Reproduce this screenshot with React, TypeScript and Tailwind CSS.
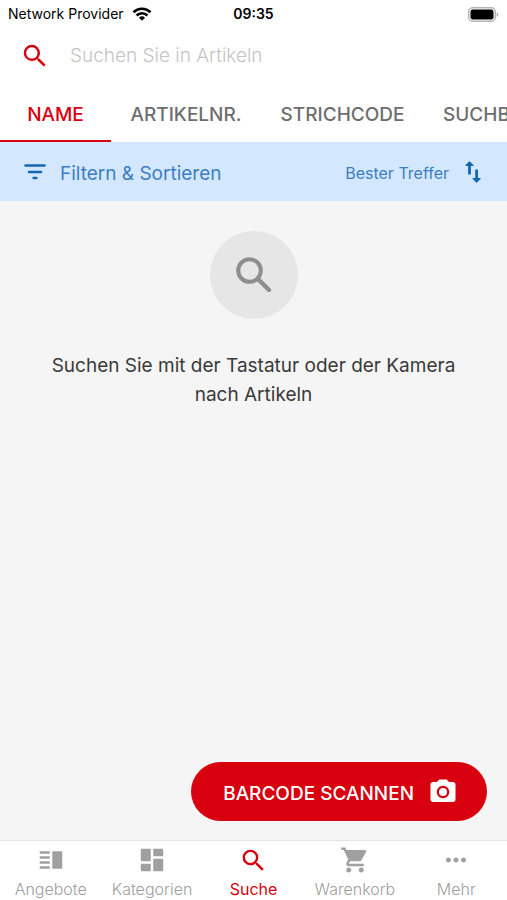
import { useState } from "react";
import type { ReactNode } from "react";
import {
  MdMoreHoriz,
  MdPhotoCamera,
  MdSearch,
  MdShoppingCart,
  MdVerticalSplit,
} from "react-icons/md";

function WifiIcon() {
  return (
    <svg viewBox="0 0 20 14" className="h-[14px] w-5" aria-hidden="true">
      <g fill="none" stroke="#000" strokeWidth="2.7">
        <path d="M1.5 5.2a12.2 12.2 0 0 1 17 0" />
        <path d="M4.6 8.5a7.6 7.6 0 0 1 10.8 0" />
      </g>
      <path d="M10 13.8 7 10.7a4.3 4.3 0 0 1 6 0z" fill="#000" />
    </svg>
  );
}

function BatteryIcon() {
  return (
    <svg viewBox="0 0 31 15" className="h-[15px] w-[31px]" aria-hidden="true">
      <rect x="0.75" y="0.75" width="26.5" height="13.5" rx="4" fill="#fff" stroke="#b4b4b4" strokeWidth="1.5" />
      <rect x="2.5" y="2.5" width="23" height="10" rx="2.2" fill="#000" />
      <path d="M28.6 5.2c1.3.4 1.9 1.3 1.9 2.3s-.6 1.9-1.9 2.3z" fill="#b4b4b4" />
    </svg>
  );
}

function FilterIcon() {
  return (
    <svg viewBox="0 0 22 16" className="h-4 w-[22px]" aria-hidden="true">
      <g stroke="#1467b3" strokeWidth="2.5" strokeLinecap="round">
        <path d="M1.5 1.5h19" />
        <path d="M5 8h12" />
        <path d="M9.6 14h2.8" />
      </g>
    </svg>
  );
}

function SwapIcon() {
  return (
    <svg viewBox="0 0 16 22" className="h-[22px] w-4" aria-hidden="true">
      <g fill="none" stroke="#1467b3" strokeWidth="2.8" strokeLinecap="round">
        <path d="M4.5 4v8.4" />
        <path d="M11.6 9.6V18" />
      </g>
      <path
        d="M4.1.5a.6.6 0 0 1 .8 0l3.5 3.6c.4.4.1 1-.4 1H1c-.5 0-.8-.6-.4-1zM11.2 21.5a.6.6 0 0 0 .8 0l3.5-3.6c.4-.4.1-1-.4-1h-7c-.5 0-.8.6-.4 1z"
        fill="#1467b3"
      />
    </svg>
  );
}

function DashboardIcon() {
  return (
    <svg viewBox="0 0 24 24" className="size-[30px]" fill="currentColor" aria-hidden="true">
      <rect x="3" y="3" width="8" height="10" rx="0.8" />
      <rect x="3" y="15" width="8" height="6" rx="0.8" />
      <rect x="13" y="3" width="8" height="6" rx="0.8" />
      <rect x="13" y="11" width="8" height="10" rx="0.8" />
    </svg>
  );
}

function LargeSearchIcon() {
  return (
    <svg viewBox="0 0 36 36" className="size-9" fill="none" stroke="#8e8e8e" aria-hidden="true">
      <circle cx="13.5" cy="13.5" r="11.3" strokeWidth="4" />
      <path d="M22.2 22.2 33 33" strokeWidth="4.4" strokeLinecap="round" />
    </svg>
  );
}

const tabs = [
  { label: "NAME", width: "min-w-[111px]" },
  { label: "ARTIKELNR.", width: "min-w-[150px]" },
  { label: "STRICHCODE", width: "min-w-[163px]" },
  { label: "SUCHBEGRIFF", width: "min-w-[150px]" },
];

const navItems: { label: string; icon: ReactNode }[] = [
  { label: "Angebote", icon: <MdVerticalSplit size={30} /> },
  { label: "Kategorien", icon: <DashboardIcon /> },
  { label: "Suche", icon: <MdSearch size={29} /> },
  { label: "Warenkorb", icon: <MdShoppingCart size={30} /> },
  { label: "Mehr", icon: <MdMoreHoriz size={30} /> },
];

export default function App() {
  const [activeTab, setActiveTab] = useState("NAME");

  return (
    <div className="flex min-h-screen flex-col bg-[#f5f5f5] font-['Inter',sans-serif]">
      <header className="bg-white">
        <div className="grid h-7 grid-cols-3 items-center px-2 text-sm text-black">
          <div className="flex items-center gap-2 whitespace-nowrap">
            <span>Network Provider</span>
            <WifiIcon />
          </div>
          <time className="text-center font-semibold">09:35</time>
          <div className="flex justify-end">
            <BatteryIcon />
          </div>
        </div>

        <label className="flex h-14 items-center gap-5 px-5 text-[#d8000f]">
          <MdSearch size={30} aria-hidden="true" />
          <input
            type="search"
            aria-label="Suchen Sie in Artikeln"
            placeholder="Suchen Sie in Artikeln"
            className="min-w-0 flex-1 bg-transparent text-[19px] font-light text-[#333] outline-none placeholder:text-[#c4c4c4]"
          />
        </label>

        <div role="tablist" className="flex h-[58px] overflow-x-auto [scrollbar-width:none]">
          {tabs.map(({ label, width }) => (
            <button
              key={label}
              type="button"
              role="tab"
              aria-selected={activeTab === label}
              onClick={() => setActiveTab(label)}
              className={`shrink-0 border-b-2 px-[19px] pt-1.5 text-[19px] font-medium ${width} ${
                activeTab === label
                  ? "border-[#d8000f] text-[#d8000f]"
                  : "border-transparent text-[#6e6e6e]"
              }`}
            >
              {label}
            </button>
          ))}
        </div>
      </header>

      <div className="flex h-[59px] items-center justify-between bg-[#d3e7ff] px-6 text-[#3b7fc0]">
        <button type="button" className="flex items-center gap-3.5 text-[19px]">
          <FilterIcon />
          <span className="pt-1.5">Filtern &amp; Sortieren</span>
        </button>
        <button type="button" className="flex items-center gap-4 pr-0.5 text-base">
          <span className="pt-0.5">Bester Treffer</span>
          <SwapIcon />
        </button>
      </div>

      <main className="flex flex-1 flex-col">
        <section className="flex flex-1 flex-col items-center px-10 pt-[30px]">
          <div className="flex size-[88px] items-center justify-center rounded-full bg-[#e6e6e6]">
            <LargeSearchIcon />
          </div>
          <p className="mt-8 text-center text-[19px] leading-[29px] text-[#3a3a3a]">
            Suchen Sie mit der Tastatur oder der Kamera nach Artikeln
          </p>
        </section>
        <div className="flex justify-end px-5 pb-[19px]">
          <button
            type="button"
            className="flex h-[59px] items-center gap-3.5 rounded-full bg-[#d8000f] pl-8 pr-[29px] text-[19px] font-medium text-white"
          >
            <span className="pt-1.5">BARCODE SCANNEN</span>
            <MdPhotoCamera size={30} aria-hidden="true" />
          </button>
        </div>
      </main>

      <nav className="grid h-[60px] grid-cols-5 border-t border-[#e4e4e4] bg-white">
        {navItems.map(({ label, icon }) => (
          <a
            key={label}
            href={`#${label.toLowerCase()}`}
            aria-current={label === "Suche" ? "page" : undefined}
            className={`flex flex-col items-center pt-1 text-base ${
              label === "Suche" ? "text-[#d8000f]" : "text-[#a0a0a0]"
            }`}
          >
            <span className="flex h-[30px] items-center" aria-hidden="true">
              {icon}
            </span>
            <span className={label === "Suche" ? "leading-7" : "leading-7 font-light"}>{label}</span>
          </a>
        ))}
      </nav>
    </div>
  );
}
